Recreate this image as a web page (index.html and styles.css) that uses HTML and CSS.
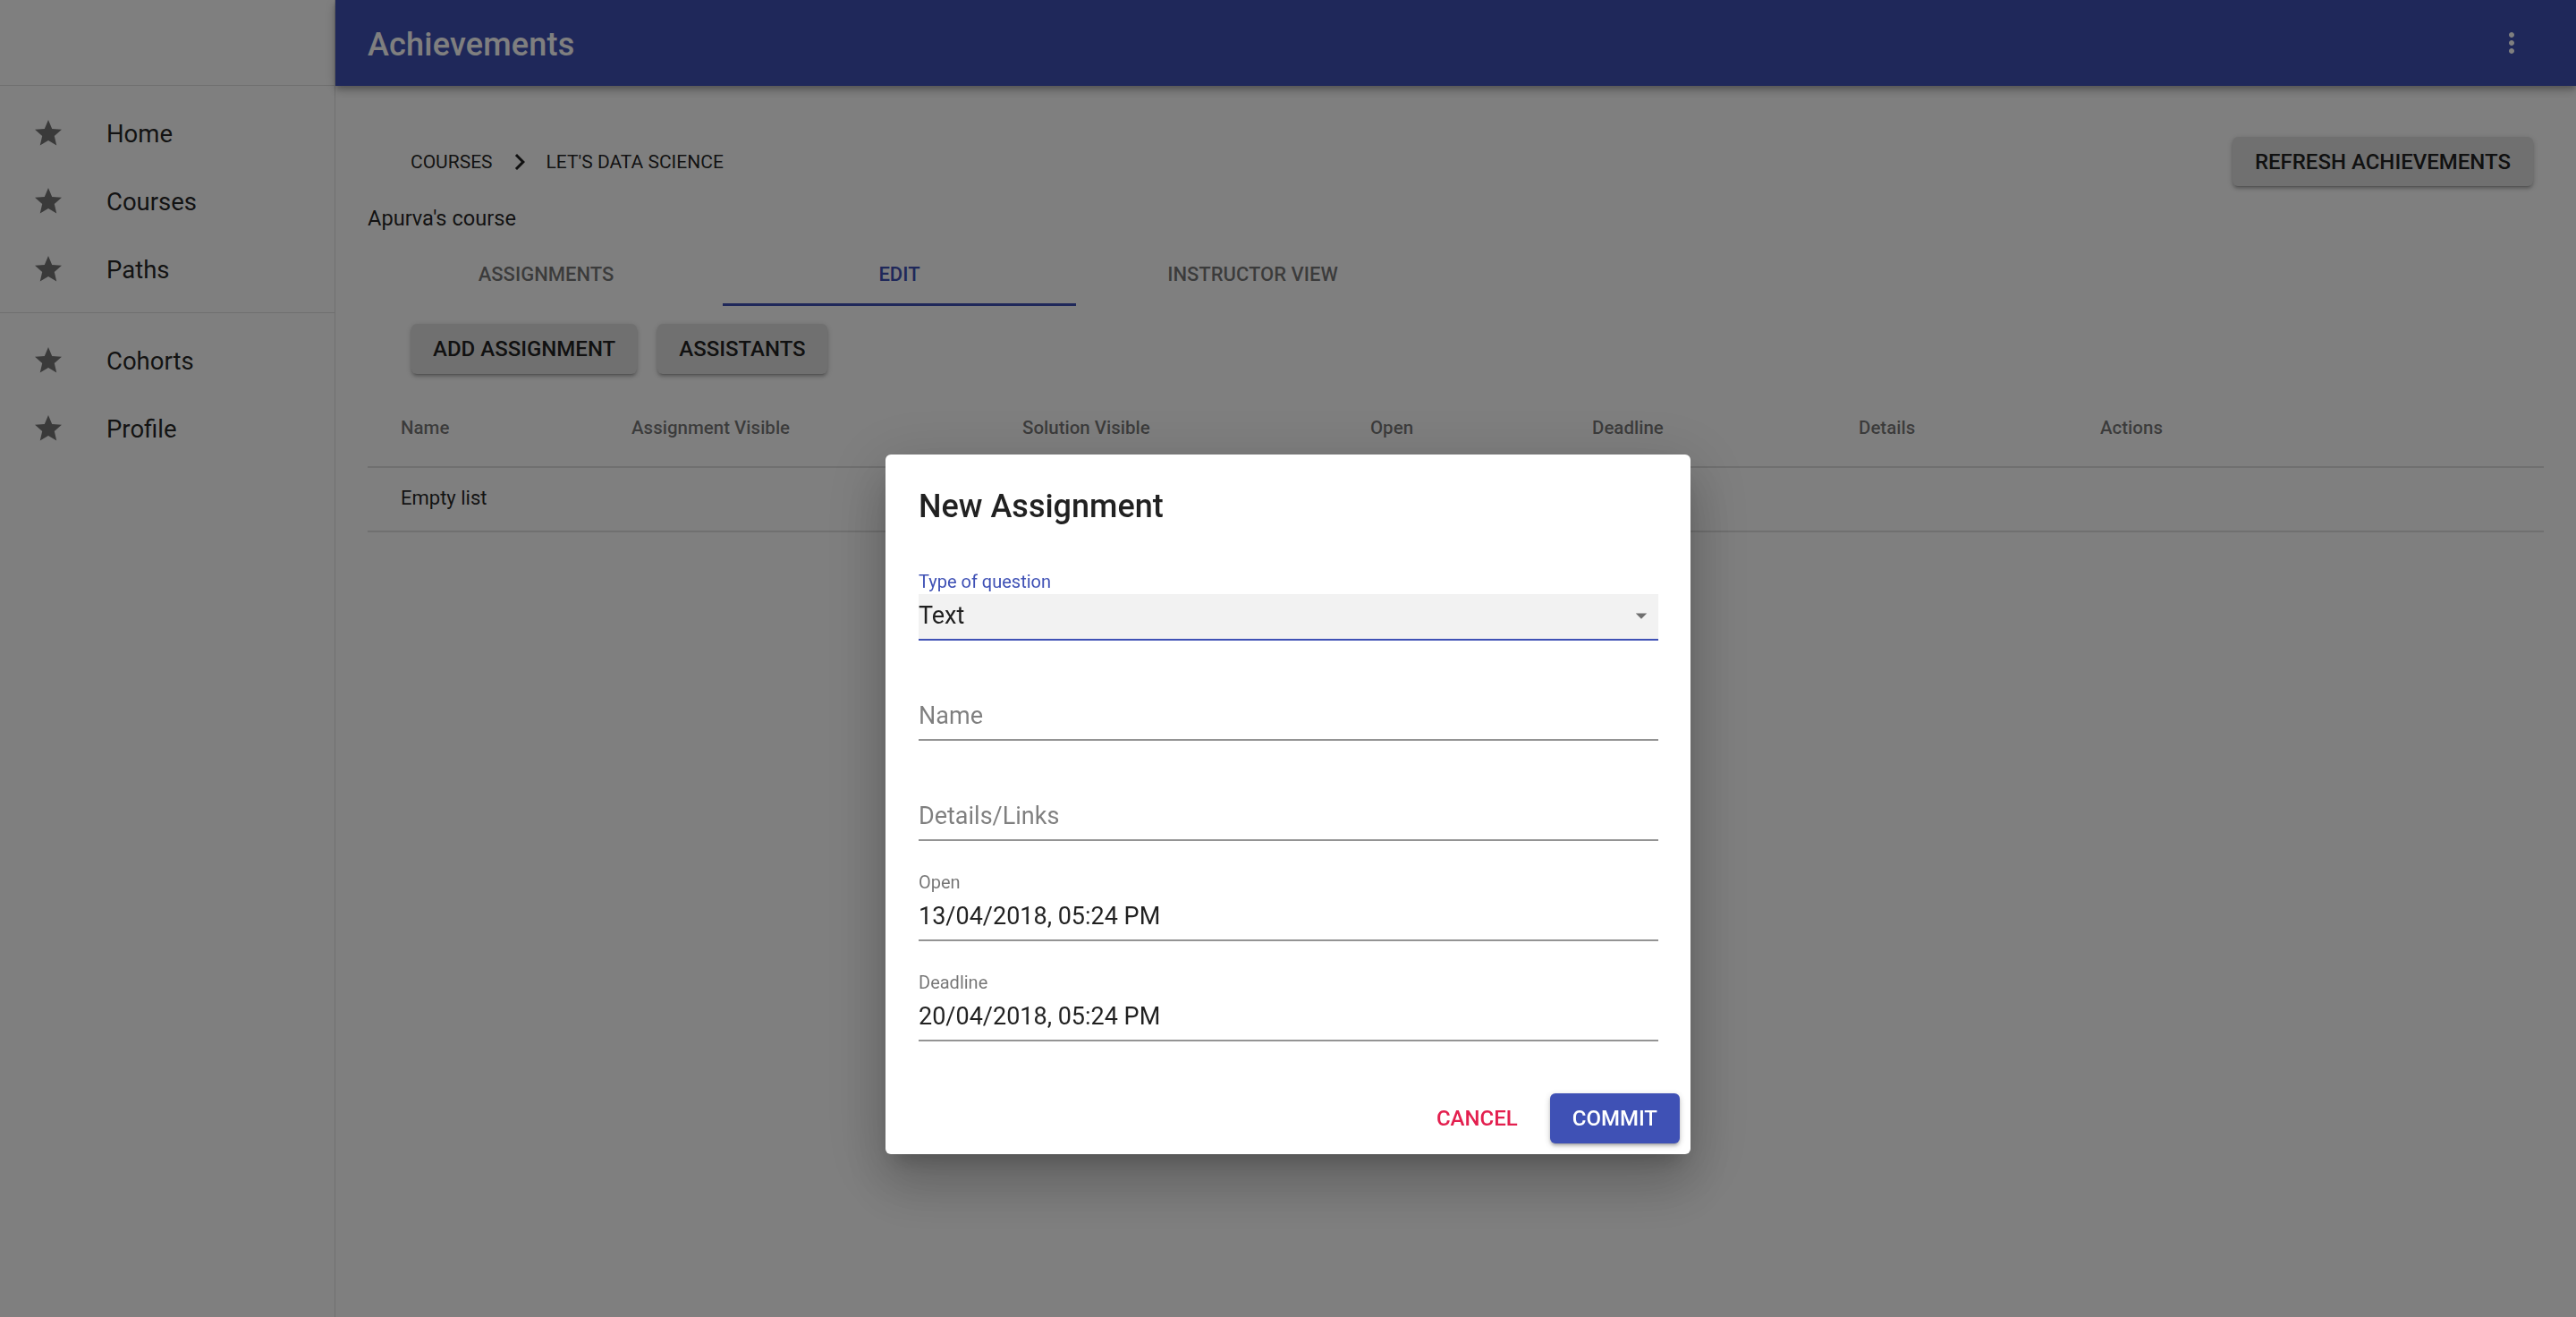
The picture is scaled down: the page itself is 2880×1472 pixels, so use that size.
FILE: index.html
```html
<!DOCTYPE html>
<html lang="en">
<head>
<meta charset="utf-8">
<title>Achievements</title>
<link rel="stylesheet" href="styles.css">
</head>
<body>
<div class="app">
  <nav class="drawer">
    <div class="drawer-top"></div>
    <ul class="nav-list">
      <li class="nav-item"><svg class="nav-icon" viewBox="0 0 24 24"><path d="M12 17.27L18.18 21l-1.64-7.03L22 9.24l-7.19-.61L12 2 9.19 8.63 2 9.24l5.46 4.73L5.82 21z"/></svg><span>Home</span></li>
      <li class="nav-item"><svg class="nav-icon" viewBox="0 0 24 24"><path d="M12 17.27L18.18 21l-1.64-7.03L22 9.24l-7.19-.61L12 2 9.19 8.63 2 9.24l5.46 4.73L5.82 21z"/></svg><span>Courses</span></li>
      <li class="nav-item"><svg class="nav-icon" viewBox="0 0 24 24"><path d="M12 17.27L18.18 21l-1.64-7.03L22 9.24l-7.19-.61L12 2 9.19 8.63 2 9.24l5.46 4.73L5.82 21z"/></svg><span>Paths</span></li>
    </ul>
    <ul class="nav-list with-divider">
      <li class="nav-item"><svg class="nav-icon" viewBox="0 0 24 24"><path d="M12 17.27L18.18 21l-1.64-7.03L22 9.24l-7.19-.61L12 2 9.19 8.63 2 9.24l5.46 4.73L5.82 21z"/></svg><span>Cohorts</span></li>
      <li class="nav-item"><svg class="nav-icon" viewBox="0 0 24 24"><path d="M12 17.27L18.18 21l-1.64-7.03L22 9.24l-7.19-.61L12 2 9.19 8.63 2 9.24l5.46 4.73L5.82 21z"/></svg><span>Profile</span></li>
    </ul>
  </nav>

  <div class="main">
    <header class="appbar">
      <h1 class="appbar-title">Achievements</h1>
      <button class="icon-btn" aria-label="more">
        <svg viewBox="0 0 24 24"><path d="M12 8c1.1 0 2-.9 2-2s-.9-2-2-2-2 .9-2 2 .9 2 2 2zm0 2c-1.1 0-2 .9-2 2s.9 2 2 2 2-.9 2-2-.9-2-2-2zm0 6c-1.1 0-2 .9-2 2s.9 2 2 2 2-.9 2-2-.9-2-2-2z"/></svg>
      </button>
    </header>

    <section class="content">
      <div class="top-row">
        <div class="breadcrumbs">
          <span class="crumb">Courses</span>
          <svg class="crumb-sep" viewBox="0 0 24 24"><path d="M10 6L8.59 7.41 13.17 12l-4.58 4.59L10 18l6-6z"/></svg>
          <span class="crumb">Let's data science</span>
        </div>
        <button class="btn raised refresh">Refresh achievements</button>
      </div>

      <div class="course-owner">Apurva's course</div>

      <div class="tabs">
        <div class="tab">Assignments</div>
        <div class="tab active">Edit</div>
        <div class="tab">Instructor view</div>
      </div>

      <div class="actions-row">
        <button class="btn raised">Add assignment</button>
        <button class="btn raised">Assistants</button>
      </div>

      <table class="table">
        <colgroup>
          <col class="c1"><col class="c2"><col class="c3"><col class="c4"><col class="c5"><col class="c6"><col class="c7">
        </colgroup>
        <thead>
          <tr>
            <th>Name</th><th>Assignment Visible</th><th>Solution Visible</th><th>Open</th><th>Deadline</th><th>Details</th><th>Actions</th>
          </tr>
        </thead>
        <tbody>
          <tr><td colspan="7">Empty list</td></tr>
        </tbody>
      </table>
    </section>
  </div>
</div>

<div class="backdrop"></div>

<div class="dialog-layer">
  <div class="dialog" role="dialog">
    <h2 class="dialog-title">New Assignment</h2>
    <div class="dialog-content">
      <div class="field">
        <div class="field-label focused">Type of question</div>
        <div class="field-input select">
          <span class="value">Text</span>
          <svg class="select-arrow" viewBox="0 0 24 24"><path d="M7 10l5 5 5-5z"/></svg>
        </div>
      </div>
      <div class="field">
        <div class="field-label"></div>
        <div class="field-input"><span class="placeholder">Name</span></div>
      </div>
      <div class="field">
        <div class="field-label"></div>
        <div class="field-input"><span class="placeholder">Details/Links</span></div>
      </div>
      <div class="field">
        <div class="field-label">Open</div>
        <div class="field-input"><span class="value">13/04/2018, 05:24 PM</span></div>
      </div>
      <div class="field">
        <div class="field-label">Deadline</div>
        <div class="field-input"><span class="value">20/04/2018, 05:24 PM</span></div>
      </div>
    </div>
    <div class="dialog-actions">
      <button class="btn text-btn secondary">Cancel</button>
      <button class="btn raised primary">Commit</button>
    </div>
  </div>
</div>
</body>
</html>
```

FILE: styles.css
```css
* { box-sizing: border-box; }

html, body {
  margin: 0;
  padding: 0;
  height: 100%;
}

body {
  font-family: Roboto, "Liberation Sans", Arial, sans-serif;
  color: rgba(0, 0, 0, 0.87);
  background: #fff;
  overflow: hidden;
}

.app {
  display: flex;
  height: 100vh;
}

/* ---------- Drawer ---------- */
.drawer {
  width: 375px;
  flex: 0 0 375px;
  border-right: 1px solid rgba(0, 0, 0, 0.12);
  background: #fff;
}

.drawer-top {
  height: 96px;
  border-bottom: 1px solid rgba(0, 0, 0, 0.12);
}

.nav-list {
  list-style: none;
  margin: 0;
  padding: 13px 0 12px;
}

.nav-list.with-divider {
  border-top: 1px solid rgba(0, 0, 0, 0.12);
}

.nav-item {
  display: flex;
  align-items: center;
  height: 76px;
  padding-left: 36px;
  padding-top: 4px;
  font-size: 27.5px;
  color: rgba(0, 0, 0, 0.87);
}

.nav-icon {
  width: 36px;
  height: 36px;
  fill: rgba(0, 0, 0, 0.54);
  margin-right: 47px;
  flex: 0 0 36px;
}

/* ---------- Main ---------- */
.main {
  flex: 1;
  display: flex;
  flex-direction: column;
  min-width: 0;
}

.appbar {
  height: 96px;
  flex: 0 0 96px;
  background: #3f51b5;
  color: #fff;
  display: flex;
  align-items: center;
  justify-content: space-between;
  padding: 0 36px;
  position: relative;
  z-index: 2;
  box-shadow: 0 3px 6px -1px rgba(0,0,0,0.2), 0 6px 8px 0 rgba(0,0,0,0.14), 0 2px 15px 0 rgba(0,0,0,0.12);
}

.appbar-title {
  margin: 3px 0 0;
  font-size: 36px;
  font-weight: 500;
  letter-spacing: 0.2px;
}

.icon-btn {
  width: 72px;
  height: 72px;
  padding: 18px;
  border: 0;
  background: transparent;
  display: flex;
  align-items: center;
  justify-content: center;
}

.icon-btn svg {
  width: 36px;
  height: 36px;
  fill: #fff;
}

.content {
  padding: 57px 36px 0;
}

.top-row {
  display: flex;
  align-items: center;
  justify-content: space-between;
  padding-left: 48px;
  padding-right: 12px;
}

.breadcrumbs {
  display: flex;
  align-items: center;
  font-size: 21px;
  text-transform: uppercase;
  color: rgba(0, 0, 0, 0.87);
}

.crumb-sep {
  width: 36px;
  height: 36px;
  margin: 0 12px;
  fill: rgba(0, 0, 0, 0.87);
}

.btn {
  font-family: Roboto, "Liberation Sans", Arial, sans-serif;
  font-size: 24px;
  font-weight: 500;
  text-transform: uppercase;
  border: 0;
  border-radius: 6px;
  height: 56px;
  padding: 0 24px;
  color: rgba(0, 0, 0, 0.87);
  background: transparent;
  cursor: pointer;
}

.btn.raised {
  background: #e0e0e0;
  box-shadow: 0 2px 7px 0 rgba(0,0,0,0.2), 0 3px 3px 0 rgba(0,0,0,0.14), 0 4px 1px -3px rgba(0,0,0,0.12);
}

.btn.refresh {
  height: 55px;
  padding: 0 25px;
}

.btn.primary {
  background: #3f51b5;
  color: #fff;
  padding: 0 25px;
}

.btn.secondary {
  color: #e3204f;
}

.course-owner {
  font-size: 23.6px;
  line-height: 32px;
  margin-top: 20px;
}

.tabs {
  display: flex;
  margin-top: 12px;
  margin-left: 2px;
  height: 70px;
}

.tab {
  width: 395px;
  display: flex;
  align-items: center;
  justify-content: center;
  font-size: 22px;
  font-weight: 500;
  text-transform: uppercase;
  color: rgba(0, 0, 0, 0.54);
  border-bottom: 3px solid transparent;
  padding-top: 1px;
}

.tab.active {
  color: #3f51b5;
  border-bottom-color: #3f51b5;
}

.actions-row {
  display: flex;
  gap: 23px;
  margin-top: 20px;
  padding-left: 49px;
}

.table {
  width: 100%;
  border-collapse: collapse;
  table-layout: fixed;
  margin-top: 19px;
}

.table .c1 { width: 258px; }
.table .c2 { width: 437px; }
.table .c3 { width: 389px; }
.table .c4 { width: 248px; }
.table .c5 { width: 298px; }
.table .c6 { width: 270px; }
.table .c7 { width: auto; }

.table th {
  height: 85px;
  text-align: left;
  font-size: 20.5px;
  font-weight: 500;
  color: rgba(0, 0, 0, 0.54);
  padding: 0 0 2px 37px;
  border-bottom: 2px solid #e0e0e0;
}

.table td {
  height: 72px;
  font-size: 22px;
  padding: 0 0 4px 37px;
  border-bottom: 2px solid #e0e0e0;
}

/* ---------- Dialog ---------- */
.backdrop {
  position: fixed;
  inset: 0;
  background: rgba(0, 0, 0, 0.5);
  z-index: 10;
}

.dialog-layer {
  position: fixed;
  inset: 0;
  z-index: 11;
  display: flex;
  justify-content: center;
  align-items: flex-start;
  padding-top: 508px;
}

.dialog {
  width: 900px;
  background: #fff;
  border-radius: 6px;
  box-shadow: 0 16px 22px -10px rgba(0,0,0,0.2), 0 36px 57px 4px rgba(0,0,0,0.14), 0 14px 69px 12px rgba(0,0,0,0.12);
}

.dialog-title {
  margin: 0;
  padding: 30px 36px 0 37px;
  font-size: 36px;
  line-height: 56px;
  font-weight: 500;
  color: rgba(0, 0, 0, 0.87);
}

.dialog-content {
  padding: 10px 36px 0 37px;
}

.field {
  margin-top: 37px;
}

.field-label {
  height: 23px;
  font-size: 20px;
  line-height: 19px;
  color: rgba(0, 0, 0, 0.54);
}

.field-label.focused {
  color: #3f51b5;
}

.field-input {
  height: 52px;
  padding-bottom: 2px;
  line-height: 46px;
  font-size: 27px;
  border-bottom: 2px solid rgba(0, 0, 0, 0.42);
  display: flex;
  align-items: center;
  justify-content: space-between;
}

.field-input .value {
  color: rgba(0, 0, 0, 0.87);
}

.field-input .placeholder {
  color: rgba(0, 0, 0, 0.5);
}

.field-input.select {
  background: rgba(0, 0, 0, 0.05);
  border-bottom-color: #3f51b5;
}

.select-arrow {
  width: 30px;
  height: 30px;
  fill: rgba(0, 0, 0, 0.54);
  margin-right: 4px;
}

.dialog-actions {
  display: flex;
  justify-content: flex-end;
  gap: 12px;
  padding: 58px 12px 12px;
}
```
